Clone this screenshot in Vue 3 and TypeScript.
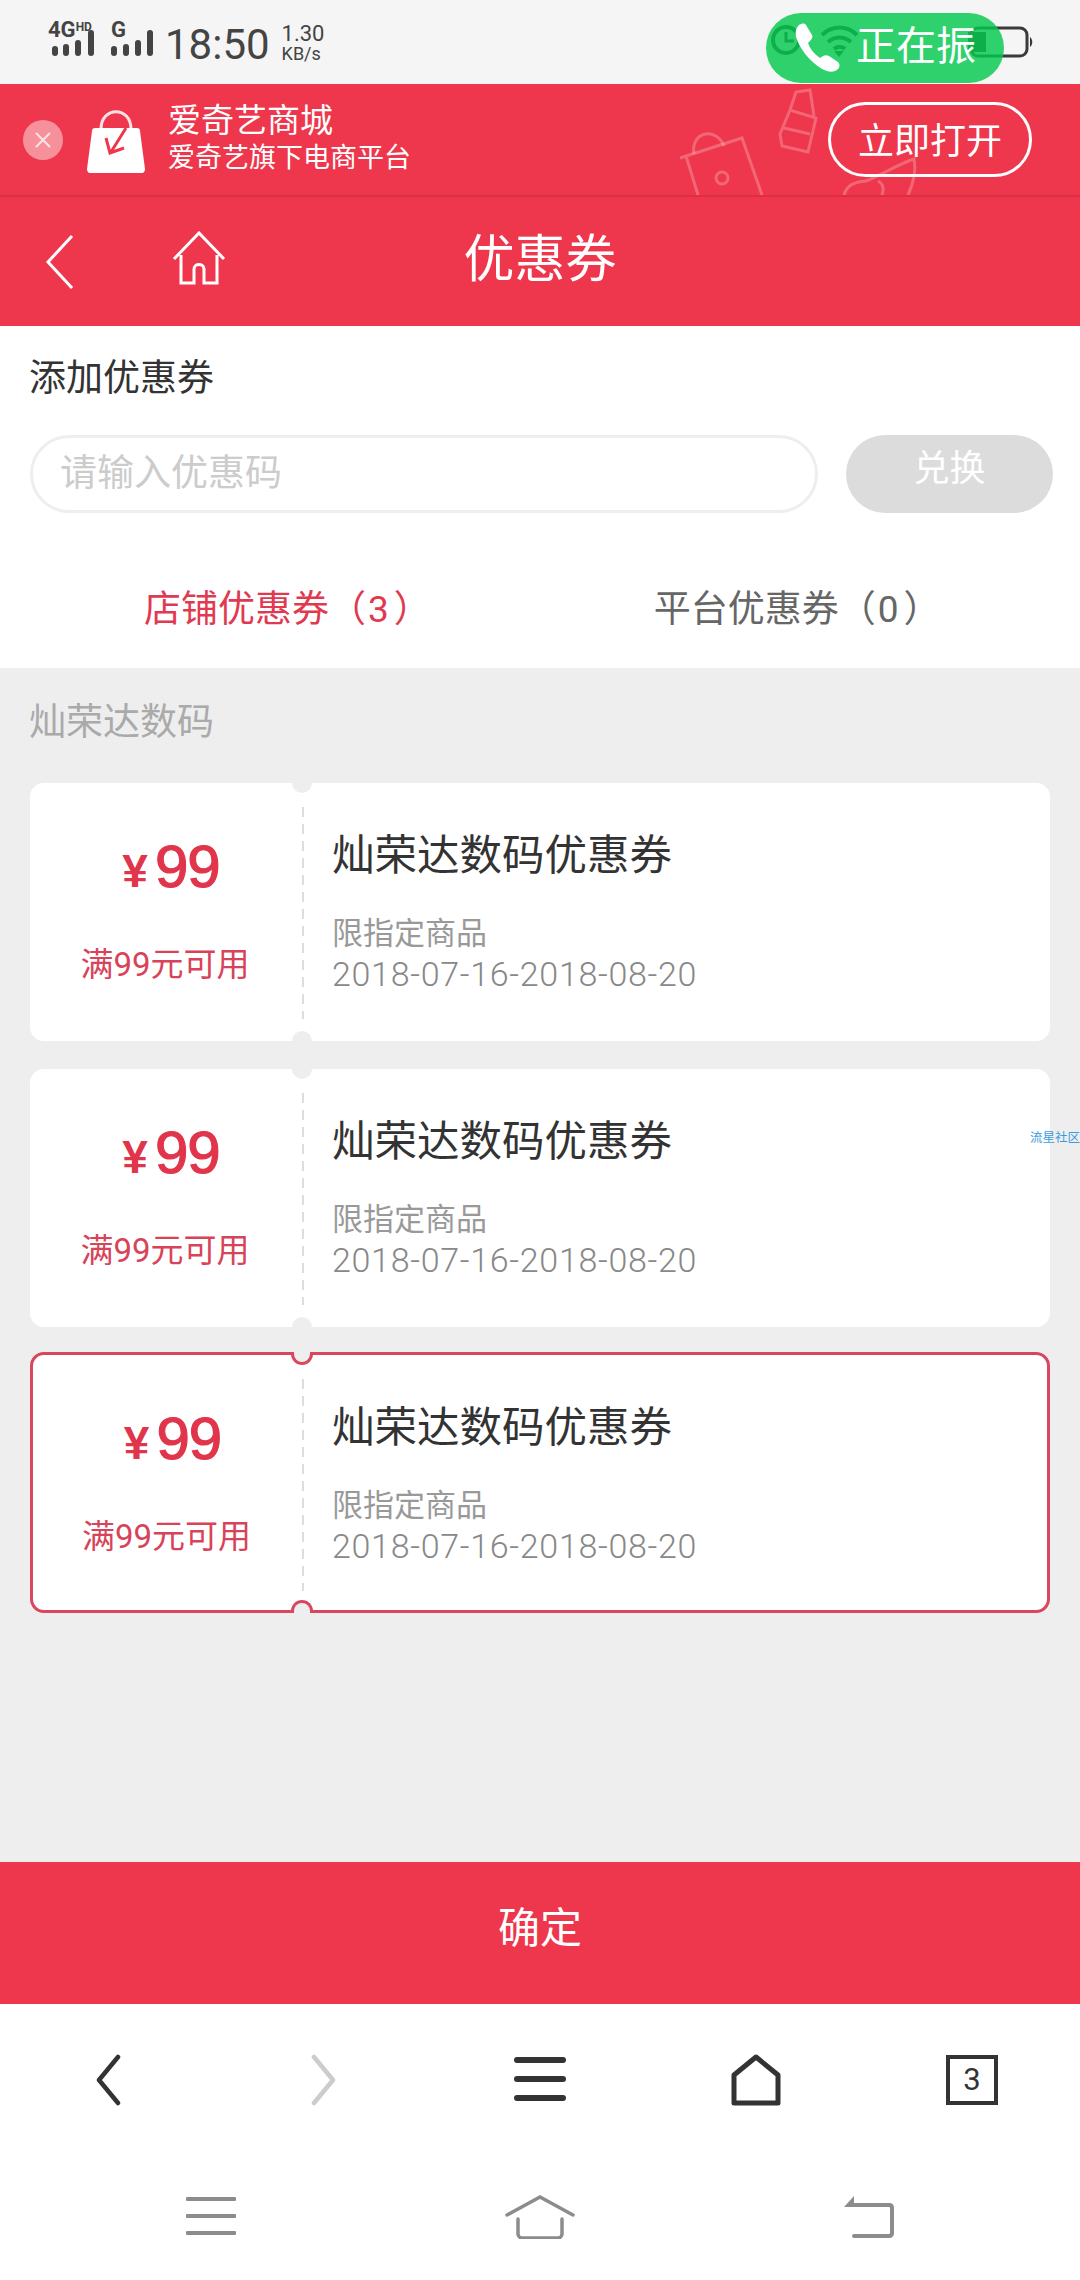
<template>
  <div class="page">
    <div class="status">
      <div class="net">
        <div class="net-label"><b>4G</b><i>HD</i></div>
        <svg class="bars" width="46" height="26" viewBox="0 0 46 26" fill="#444">
          <rect x="4" y="16" width="6" height="10" rx="3" />
          <rect x="15" y="14" width="6" height="12" rx="3" />
          <rect x="27" y="10" width="6" height="16" rx="3" />
          <rect x="40" y="0" width="6" height="26" rx="3" />
        </svg>
      </div>
      <div class="net net-g">
        <div class="net-label"><b>G</b></div>
        <svg class="bars" width="44" height="26" viewBox="0 0 44 26" fill="#444">
          <rect x="0" y="16" width="6" height="10" rx="3" />
          <rect x="12" y="14" width="6" height="12" rx="3" />
          <rect x="24" y="10" width="6" height="16" rx="3" />
          <rect x="36" y="0" width="6" height="26" rx="3" />
        </svg>
      </div>
      <span class="time">18:50</span>
      <div class="speed"><span>1.30</span><span class="speed-unit">KB/s</span></div>
      <svg class="status-icons" width="270" height="40" viewBox="0 0 270 40" fill="none" stroke="#3a3a3a">
        <circle cx="20" cy="16" r="13" stroke-width="4" />
        <path d="M20 8v9h8" stroke-width="3" />
        <path d="M56 11c10-10 25-10 35 0M62 18c7-6 16-6 23 0M68 25c3-3 8-3 11 0" stroke-width="4" />
        <path d="M73 33l-5-6h10z" fill="#3a3a3a" stroke="none" />
        <rect x="205" y="4" width="56" height="28" rx="7" stroke-width="3" />
        <rect x="202" y="8" width="18" height="20" fill="#3a3a3a" stroke="none" />
        <path d="M264 13c3 2 3 8 0 10z" fill="#3a3a3a" stroke="none" />
      </svg>
      <div class="call">
        <svg width="50" height="50" viewBox="0 0 50 50" fill="#fff">
          <path d="M7 3c3-2 6-2 7 0l6 10c1 2 0 4-2 6l-2 2c2 6 6 11 12 15l3-2c2-1 4-1 6 0l9 6c2 2 2 5 0 7-4 4-10 3-16 0C17 39 8 27 4 15 3 10 4 6 7 3z" />
        </svg>
        <span>正在振</span>
      </div>
    </div>

    <div class="banner">
      <svg class="decor" width="260" height="111" viewBox="0 0 260 111" fill="none" stroke="#fff" stroke-opacity=".24" stroke-width="3">
        <path d="M8 74l62-20 20 57M14 72l12 39" />
        <path d="M22 70c-4-22 22-28 30-8" />
        <circle cx="50" cy="94" r="6" />
        <path d="M108 50l10-24 26 8-8 34-26-6zM118 26l6-18 14-2 4 26M112 44l26 6" />
        <path d="M172 111c3-10 10-13 22-14 16-6 30-16 48-22 2 10 0 24-6 36M206 97c6 3 6 8 4 14" />
      </svg>
      <span class="close">
        <svg width="20" height="20" viewBox="0 0 20 20" stroke="#fff" stroke-opacity=".75" stroke-width="2">
          <path d="M3 3l14 14M17 3L3 17" />
        </svg>
      </span>
      <svg class="bag" width="58" height="64" viewBox="0 0 58 64">
        <path d="M14 20C14-3 44-3 44 20" fill="none" stroke="#fff" stroke-opacity=".85" stroke-width="3" />
        <path d="M8 19h42c2 0 3 1 3 3l5 38c0 2-1 4-3 4H3c-2 0-3-2-3-4l5-38c0-2 1-3 3-3z" fill="#fff" />
        <path d="M39 19L24 43M19 29l4 15 14-5" fill="none" stroke="#ee374c" stroke-width="3" />
      </svg>
      <div class="banner-text">
        <span class="banner-title">爱奇艺商城</span>
        <span class="banner-sub">爱奇艺旗下电商平台</span>
      </div>
      <button class="open">立即打开</button>
    </div>

    <header class="header">
      <svg class="head-back" width="30" height="54" viewBox="0 0 30 54" fill="none" stroke="#fff" stroke-width="3">
        <path d="M27 1L3 27l24 26" />
      </svg>
      <svg class="head-home" width="54" height="54" viewBox="0 0 54 54" fill="none" stroke="#fff" stroke-width="3">
        <path d="M2 28L27 2l25 26M9 24v28h13V38c0-6 10-6 10 0v14h13V24" />
      </svg>
      <h1>优惠券</h1>
    </header>

    <section class="add">
      <p class="add-title">添加优惠券</p>
      <div class="add-row">
        <div class="code">请输入优惠码</div>
        <button class="swap">兑换</button>
      </div>
      <div class="tabs">
        <span v-for="tab in tabs" :key="tab.name" class="tab" :class="{ on: tab.active }">{{ tab.name }}（<span class="count">{{ tab.count }}</span>）</span>
      </div>
    </section>

    <main class="list">
      <p class="shop">灿荣达数码</p>
      <div class="coupons">
        <div v-for="c in coupons" :key="c.id" class="coupon" :class="{ picked: c.picked }">
          <i class="notch top"></i>
          <i class="notch bottom"></i>
          <div class="left">
            <div class="price"><span class="yen">¥</span>{{ c.price }}</div>
            <div class="limit">满{{ c.price }}元可用</div>
          </div>
          <div class="right">
            <div class="name">{{ c.name }}</div>
            <div class="scope">限指定商品</div>
            <div class="date">{{ c.date }}</div>
          </div>
        </div>
      </div>
      <span class="mark">流星社区</span>
    </main>

    <button class="ok">确定</button>

    <nav class="browser">
      <svg width="30" height="52" viewBox="0 0 30 52" fill="none" stroke="#333" stroke-width="4.5" stroke-linecap="round" stroke-linejoin="round">
        <path d="M25 3L6 26l19 23" />
      </svg>
      <svg width="30" height="52" viewBox="0 0 30 52" fill="none" stroke="#ccc" stroke-width="4.5" stroke-linecap="round" stroke-linejoin="round">
        <path d="M5 3l19 23L5 49" />
      </svg>
      <svg width="52" height="46" viewBox="0 0 52 46" fill="#333">
        <rect y="0" width="52" height="6" rx="3" />
        <rect y="19" width="52" height="6" rx="3" />
        <rect y="38" width="52" height="6" rx="3" />
      </svg>
      <svg width="50" height="52" viewBox="0 0 50 52" fill="none" stroke="#333" stroke-width="5" stroke-linejoin="round">
        <path d="M25 3L3 21v28h44V21z" />
      </svg>
      <div class="pages">3</div>
    </nav>

    <nav class="system">
      <svg width="50" height="40" viewBox="0 0 50 40" fill="#8c8c8c">
        <rect y="0" width="50" height="4" rx="1" />
        <rect y="17" width="50" height="4" rx="1" />
        <rect y="34" width="50" height="4" rx="1" />
      </svg>
      <svg width="70" height="44" viewBox="0 0 70 44" fill="none" stroke="#8c8c8c" stroke-width="3.5" stroke-linecap="round">
        <path d="M2 20L35 2l33 18M13 24v15c0 2 2 4 4 4h36c2 0 4-2 4-4V24" />
      </svg>
      <svg width="50" height="42" viewBox="0 0 50 42" fill="none" stroke="#8c8c8c" stroke-width="4" stroke-linecap="round">
        <path d="M8 9h37c2 0 3 1 3 3v25c0 2-1 3-3 3H10" />
        <path d="M0 11L10 0v11z" fill="#8c8c8c" stroke="none" />
      </svg>
    </nav>
  </div>
</template>

<script setup lang="ts">
interface Coupon {
  id: number
  price: number
  name: string
  date: string
  picked: boolean
}

const tabs = [
  { name: '店铺优惠券', count: 3, active: true },
  { name: '平台优惠券', count: 0, active: false },
]

const coupons: Coupon[] = [1, 2, 3].map((id) => ({
  id,
  price: 99,
  name: '灿荣达数码优惠券',
  date: '2018-07-16-2018-08-20',
  picked: id === 3,
}))
</script>

<style>
body {
  background: #fff;
}
</style>

<style scoped>
.page {
  display: flex;
  flex-direction: column;
  width: 1080px;
  height: 2280px;
  overflow: hidden;
  font-family: Roboto, "Noto Sans CJK SC", sans-serif;
  color: #333;
}

.status {
  position: relative;
  display: flex;
  align-items: center;
  height: 84px;
  padding-left: 48px;
  box-sizing: border-box;
  background: #f5f5f5;
  color: #444;
}
.net {
  width: 50px;
  height: 36px;
  margin-top: -6px;
  position: relative;
}
.net-g {
  width: 46px;
  margin-left: 13px;
}
.net-label {
  display: flex;
  height: 18px;
  line-height: 18px;
}
.net-label b {
  font-size: 22px;
}
.net-label i {
  font-size: 12px;
  font-style: normal;
  font-weight: 700;
  line-height: 12px;
}
.bars {
  position: absolute;
  left: 0;
  top: 9px;
}
.time {
  margin-left: 8px;
  margin-top: 4px;
  font-size: 42px;
}
.speed {
  display: flex;
  flex-direction: column;
  margin-left: 12px;
  margin-top: 2px;
  font-size: 22px;
  line-height: 21px;
}
.speed-unit {
  font-size: 18px;
  line-height: 19px;
}
.status-icons {
  position: absolute;
  left: 766px;
  top: 24px;
}
.call {
  position: absolute;
  left: 766px;
  top: 13px;
  display: flex;
  align-items: center;
  gap: 14px;
  width: 238px;
  height: 70px;
  padding-left: 26px;
  box-sizing: border-box;
  border-radius: 35px;
  background: rgba(4, 201, 78, 0.82);
  color: #fff;
  font-size: 40px;
}
.call span {
  margin-top: -10px;
}
.call svg {
  margin-top: -2px;
}

.banner {
  position: relative;
  display: flex;
  align-items: center;
  height: 111px;
  box-sizing: border-box;
  background: #ee374c;
  color: #fff;
  overflow: hidden;
}
.decor {
  position: absolute;
  left: 672px;
  top: 0;
}
.close {
  display: flex;
  align-items: center;
  justify-content: center;
  width: 40px;
  height: 40px;
  margin-left: 23px;
  border-radius: 50%;
  background: rgba(255, 255, 255, 0.45);
}
.bag {
  margin-left: 24px;
  margin-top: 2px;
}
.banner-text {
  display: flex;
  flex-direction: column;
  margin-left: 23px;
  margin-top: -4px;
}
.banner-title {
  font-size: 33px;
  line-height: 40px;
}
.banner-sub {
  font-size: 27px;
  line-height: 34px;
}
.open {
  position: relative;
  width: 204px;
  height: 75px;
  margin-left: auto;
  margin-right: 48px;
  padding: 0 0 3px;
  border: 3px solid #fff;
  border-radius: 38px;
  background: transparent;
  color: #fff;
  font-family: inherit;
  font-size: 36px;
}

.header {
  position: relative;
  display: flex;
  align-items: center;
  justify-content: center;
  height: 131px;
  padding-bottom: 14px;
  box-sizing: border-box;
  border-top: 2px solid #dc2f43;
  background: #ee374c;
}
.header h1 {
  margin: 0;
  font-size: 51px;
  font-weight: 400;
  color: #fff;
}
.head-back {
  position: absolute;
  left: 45px;
  top: 38px;
}
.head-home {
  position: absolute;
  left: 172px;
  top: 34px;
}

.add {
  height: 342px;
  box-sizing: border-box;
  padding: 31px 27px 0 29px;
  background: #fff;
}
.add-title {
  margin: 0;
  font-size: 37px;
  line-height: 44px;
  color: #333;
}
.add-row {
  display: flex;
  justify-content: space-between;
  margin-top: 34px;
  padding-left: 1px;
}
.code {
  width: 788px;
  height: 78px;
  padding-left: 27px;
  box-sizing: border-box;
  border: 3px solid #eee;
  border-radius: 39px;
  font-size: 37px;
  line-height: 72px;
  color: #ccc;
}
.swap {
  width: 207px;
  height: 78px;
  padding: 0 0 18px;
  border: 0;
  border-radius: 39px;
  background: #dcdcdc;
  color: #fff;
  font-family: inherit;
  font-size: 36px;
}
.tabs {
  display: flex;
  gap: 223px;
  margin: 72px 0 0 115px;
}
.tab {
  font-size: 37px;
  line-height: 50px;
  white-space: nowrap;
  color: #666;
}
.tab.on {
  color: #e03a50;
}
.count {
  margin: 0 5px 0 2px;
  font-size: 37px;
}

.list {
  position: relative;
  flex: 1;
  padding: 0 30px;
  background: #eee;
}
.shop {
  margin: 0 0 0 -1px;
  padding-top: 33px;
  font-size: 37px;
  line-height: 44px;
  color: #aaa;
}
.coupons {
  display: flex;
  flex-direction: column;
  gap: 28px;
  margin-top: 38px;
}
.coupon {
  position: relative;
  display: flex;
  height: 258px;
  box-sizing: border-box;
  border-radius: 14px;
  background: #fff;
}
.coupon.picked {
  height: 261px;
  margin-top: -3px;
  border: 3px solid #d9475e;
}
.notch {
  position: absolute;
  left: 262px;
  width: 20px;
  height: 20px;
  border-radius: 50%;
  background: #eee;
}
.notch.top {
  top: -10px;
}
.notch.bottom {
  bottom: -10px;
}
.picked .notch {
  left: 258px;
  width: 22px;
  height: 13px;
  box-sizing: border-box;
  border: 3px solid #d9475e;
}
.picked .notch.top {
  top: -3px;
  border-top: 0;
  border-radius: 0 0 11px 11px;
}
.picked .notch.bottom {
  bottom: -3px;
  border-bottom: 0;
  border-radius: 11px 11px 0 0;
}
.left {
  display: flex;
  flex-direction: column;
  align-items: center;
  width: 274px;
  height: 212px;
  margin-top: 24px;
  box-sizing: border-box;
  padding-right: 6px;
  background: repeating-linear-gradient(to bottom, #ddd 0 10px, transparent 10px 17px) right top / 2px 100% no-repeat;
  color: #e0354b;
}
.picked .left {
  width: 271px;
}
.price {
  margin-top: 27px;
  padding-left: 14px;
  font-family: "Liberation Sans", sans-serif;
  font-size: 60px;
  line-height: 66px;
  letter-spacing: -1px;
  -webkit-text-stroke: 1.2px #e0354b;
}
.yen {
  margin-right: 8px;
  font-size: 46px;
  font-weight: 700;
  -webkit-text-stroke: 0;
}
.limit {
  margin-top: 41px;
  padding-left: 2px;
  font-size: 33px;
  line-height: 40px;
  color: #d8435a;
}
.right {
  padding: 44px 0 0 28px;
}
.name {
  font-size: 42.5px;
  line-height: 58px;
  color: #333;
}
.scope {
  margin-top: 30px;
  font-size: 31px;
  line-height: 38px;
  color: #999;
}
.date {
  margin-top: 1px;
  font-size: 34px;
  font-weight: 300;
  line-height: 40px;
  letter-spacing: 0.7px;
  color: #888;
}
.mark {
  position: absolute;
  right: 0;
  top: 462px;
  font-size: 12.5px;
  line-height: 16px;
  color: #3a9be0;
}

.ok {
  height: 142px;
  padding: 0 0 18px;
  border: 0;
  background: #ee374c;
  color: #fff;
  font-family: inherit;
  font-size: 42px;
}

.browser {
  display: grid;
  grid-template-columns: repeat(5, 216px);
  justify-items: center;
  align-items: center;
  height: 152px;
  background: #fff;
}
.pages {
  width: 52px;
  height: 50px;
  box-sizing: border-box;
  border: 4px solid #333;
  font-size: 31px;
  line-height: 42px;
  text-align: center;
  color: #333;
}
.system {
  display: grid;
  grid-template-columns: repeat(3, 329px);
  justify-content: center;
  justify-items: center;
  align-items: center;
  height: 124px;
  padding-bottom: 2px;
  box-sizing: border-box;
  background: #fff;
}
</style>
